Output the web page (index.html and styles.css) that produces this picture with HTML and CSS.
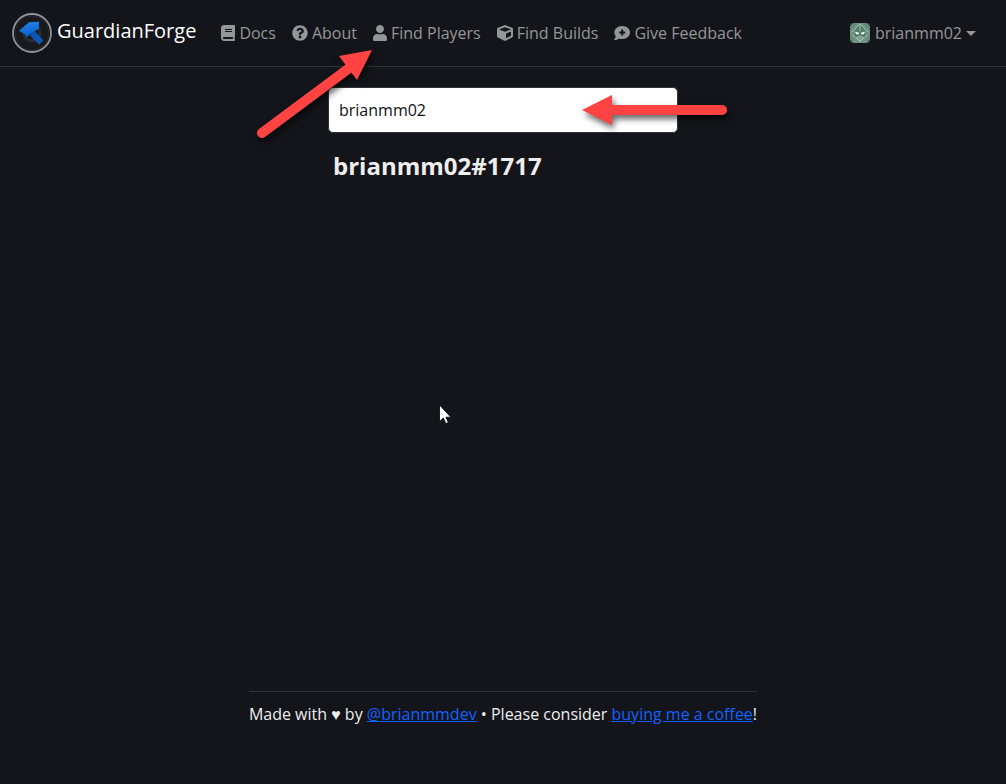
FILE: index.html
```html
<!DOCTYPE html>
<html lang="en">
<head>
<meta charset="utf-8">
<meta name="viewport" content="width=device-width, initial-scale=1">
<title>GuardianForge</title>
<link rel="stylesheet" href="styles.css">
</head>
<body>
<header class="navbar">
  <a class="brand" href="#">
    <svg class="brand-logo" viewBox="0 0 40 40" aria-hidden="true">
      <defs>
        <linearGradient id="hammer" x1="0.3" y1="0" x2="0.6" y2="1">
          <stop offset="0" stop-color="#2187ee"/>
          <stop offset="1" stop-color="#0a58c4"/>
        </linearGradient>
      </defs>
      <circle cx="20" cy="20" r="19" fill="#17191d" stroke="#929497" stroke-width="1.8"/>
      <circle cx="20" cy="20" r="16.800" fill="none" stroke="#24272b"/>
      <circle cx="20" cy="20" r="8" fill="none" stroke="#2a2d31" stroke-width="3"/>
      <path d="M18 22.500L23 18.500 31.300 27 27.300 31.800z" fill="#0f59bd"/>
      <path d="M20.300 25l5-4.200M22.800 27.800l5-4.200M25.200 30l4.500-4" stroke="#083f92" stroke-width=".8"/>
      <path d="M7 17.800L17 9.300 27 8.700V15.500L14.800 24 12.500 21z" fill="url(#hammer)"/>
    </svg>
    <span class="brand-name">GuardianForge</span>
  </a>
  <nav class="nav-links">
    <a class="nav-link" href="#">
      <svg class="icon" viewBox="0 0 448 512" aria-hidden="true"><path d="M448 360V24c0-13.300-10.700-24-24-24H96C43 0 0 43 0 96v320c0 53 43 96 96 96h328c13.300 0 24-10.700 24-24v-16c0-7.500-3.500-14.300-8.900-18.700-4.200-15.400-4.200-59.300 0-74.700 5.400-4.300 8.900-11.100 8.900-18.600zM128 134c0-3.300 2.700-6 6-6h212c3.300 0 6 2.700 6 6v20c0 3.300-2.700 6-6 6H134c-3.300 0-6-2.700-6-6v-20zm0 64c0-3.300 2.700-6 6-6h212c3.300 0 6 2.700 6 6v20c0 3.300-2.700 6-6 6H134c-3.300 0-6-2.700-6-6v-20zm253.400 250H96c-17.700 0-32-14.300-32-32 0-17.600 14.400-32 32-32h285.400c-1.900 17.100-1.900 46.900 0 64z"/></svg>
      Docs
    </a>
    <a class="nav-link" href="#">
      <svg class="icon" viewBox="0 0 512 512" aria-hidden="true"><path d="M504 256c0 137-111 248-248 248S8 393 8 256C8 119.100 119 8 256 8s248 111.100 248 248zM262.700 90c-54.500 0-89.300 23-116.500 63.800-3.500 5.300-2.400 12.400 2.700 16.300l34.700 26.300c5.200 3.900 12.600 3 16.700-2.100 17.900-22.700 30.100-35.800 57.300-35.800 20.400 0 45.700 13.100 45.700 33 0 15-12.400 22.700-32.500 34C247.100 238.500 216 254.900 216 296v4c0 6.600 5.400 12 12 12h56c6.600 0 12-5.400 12-12v-1.300c0-28.500 83.200-29.600 83.200-106.700 0-58-60.200-102-116.500-102zM256 338c-25.400 0-46 20.600-46 46s20.600 46 46 46 46-20.600 46-46-20.600-46-46-46z"/></svg>
      About
    </a>
    <a class="nav-link" href="#">
      <svg class="icon" viewBox="0 0 448 512" aria-hidden="true"><path d="M224 256c70.700 0 128-57.300 128-128S294.700 0 224 0 96 57.300 96 128s57.300 128 128 128zm89.600 32h-16.700c-22.200 10.200-46.900 16-72.900 16s-50.600-5.800-72.900-16h-16.700C60.200 288 0 348.200 0 422.400V464c0 26.500 21.500 48 48 48h352c26.500 0 48-21.500 48-48v-41.600c0-74.200-60.200-134.400-134.400-134.400z"/></svg>
      Find Players
    </a>
    <a class="nav-link" href="#">
      <svg class="icon" viewBox="0 0 512 512" aria-hidden="true"><path d="M239.100 6.300l-208 78c-18.700 7-31.100 25-31.100 45v225.100c0 18.200 10.300 34.800 26.500 42.900l208 104c13.500 6.800 29.400 6.800 42.900 0l208-104c16.300-8.100 26.500-24.800 26.500-42.900V129.300c0-20-12.400-37.900-31.100-44.900l-208-78C262 2.200 250 2.200 239.100 6.300zM256 68.400l192 72v1.100l-192 78-192-78v-1.100l192-72zm32 356V275.500l160-65v133.900l-160 80z"/></svg>
      Find Builds
    </a>
    <a class="nav-link" href="#">
      <svg class="icon" viewBox="0 0 16 16" aria-hidden="true"><path fill-rule="evenodd" d="M8.200 1C12.600 1 16 3.900 16 7.500S12.600 14 8.200 14c-1.200 0-2.300-.2-3.300-.6C3.700 14.400 2 15 .3 15c-.3 0-.4-.3-.2-.5 1-1 1.500-2.200 1.700-3.200C.9 10.200.4 8.900.4 7.500.4 3.900 3.800 1 8.200 1zM7.200 4.500v2h-2v2h2v2h2v-2h2v-2h-2v-2z"/></svg>
      Give Feedback
    </a>
  </nav>
  <button class="account" type="button" aria-haspopup="true">
    <svg class="avatar" viewBox="0 0 20 20" aria-hidden="true">
      <rect width="20" height="20" rx="4" fill="#4b7565"/>
      <path d="M6 0h8l6 7v6l-5 7H5l-5-7V7z" fill="#6e9584"/>
      <path d="M10 1L4 8l1 7 5 5 5-5 1-7z" fill="#527d6a"/>
      <path d="M2 9l8-8 8 8M3 12l7 7 7-7" stroke="#a2bbb0" fill="none"/>
      <path d="M0 5l5-5M15 0l5 5M0 15l5 5M20 15l-5 5" stroke="#7d9f90" fill="none"/>
      <path d="M10 2v6M6 15l4-2 4 2-4 3z" stroke="#a2bbb0" fill="#7e9f90"/>
      <path d="M5 8.500l4 1.300v1.500H6zM15 8.500l-4 1.300v1.500h3z" fill="#f1f7f3"/>
    </svg>
    <span>brianmm02</span>
    <span class="caret"></span>
  </button>
</header>

<main class="content">
  <input class="search" type="text" value="brianmm02" aria-label="Find players">
  <h1 class="result">brianmm02#1717</h1>
</main>

<footer class="footer">
  <p class="footer-text">Made with ♥ by <a href="#">@brianmmdev</a> • Please consider <a href="#">buying me a coffee</a>!</p>
</footer>

<svg class="annotations" width="1006" height="784" viewBox="0 0 1006 784" aria-hidden="true">
  <g class="arrow">
    <path d="M262 133L352 66" stroke="#ff4343" stroke-width="10" stroke-linecap="round"/>
    <path d="M372 50L339 56L357 80z" fill="#ff4343"/>
  </g>
  <g class="arrow">
    <path d="M722 110H605" stroke="#ff4343" stroke-width="10" stroke-linecap="round"/>
    <path d="M582 110L612 95V125z" fill="#ff4343"/>
  </g>
  <path d="M439.500 405v16.500l3.800-3.500 2.600 5.500 2.500-1-2.500-5.300h5z" fill="#fff" stroke="#000" stroke-width=".8"/>
</svg>
</body>
</html>
```

FILE: styles.css
```css
* {
  box-sizing: border-box;
}

body {
  margin: 0;
  min-height: 100vh;
  display: flex;
  flex-direction: column;
  background: #14151a;
  color: #eee;
  font-family: "Open Sans", "Noto Sans", sans-serif;
  font-size: 16px;
  line-height: 24px;
}

.navbar {
  display: flex;
  align-items: center;
  padding: 13px 30px 13px 12px;
  border-bottom: 1px solid #333;
}

.brand {
  display: flex;
  align-items: center;
  gap: 5px;
  margin-right: 17px;
  color: #fff;
  text-decoration: none;
}

.brand-logo {
  width: 40px;
  height: 40px;
}

.brand-name {
  padding-bottom: 4px;
  font-size: 20px;
}

.nav-links {
  display: flex;
  flex: 1;
}

.nav-link {
  display: flex;
  align-items: center;
  gap: 4px;
  padding: 8px;
  color: #969698;
  text-decoration: none;
  white-space: nowrap;
}

.icon {
  height: 16px;
  fill: currentColor;
}

.account {
  display: flex;
  align-items: center;
  gap: 4px;
  padding: 0;
  border: 0;
  background: none;
  color: #969698;
  font: inherit;
}

.avatar {
  width: 20px;
  height: 20px;
  margin-right: 1px;
}

.caret {
  border-top: 5px solid;
  border-right: 5px solid transparent;
  border-left: 5px solid transparent;
}

.content {
  flex: 1;
  width: 100%;
  max-width: 350px;
  margin: 0 auto;
  padding-top: 20px;
}

.search {
  display: block;
  width: 100%;
  padding: 10px;
  border: 1px solid #333;
  border-radius: 5px;
  background: #fff;
  color: #111;
  font: inherit;
}

.result {
  margin: 15px 5px;
  font-size: 24px;
  font-weight: 700;
  line-height: 36px;
}

.footer {
  display: flex;
  justify-content: center;
  padding-bottom: 58px;
}

.footer-text {
  margin: 0;
  padding-top: 10px;
  border-top: 1px solid #333;
}

.footer a {
  color: #1262ff;
}

.annotations {
  position: absolute;
  top: 0;
  left: 0;
  pointer-events: none;
}

.arrow {
  filter: drop-shadow(2px 4px 3px rgba(0, 0, 0, 0.6));
}
```
